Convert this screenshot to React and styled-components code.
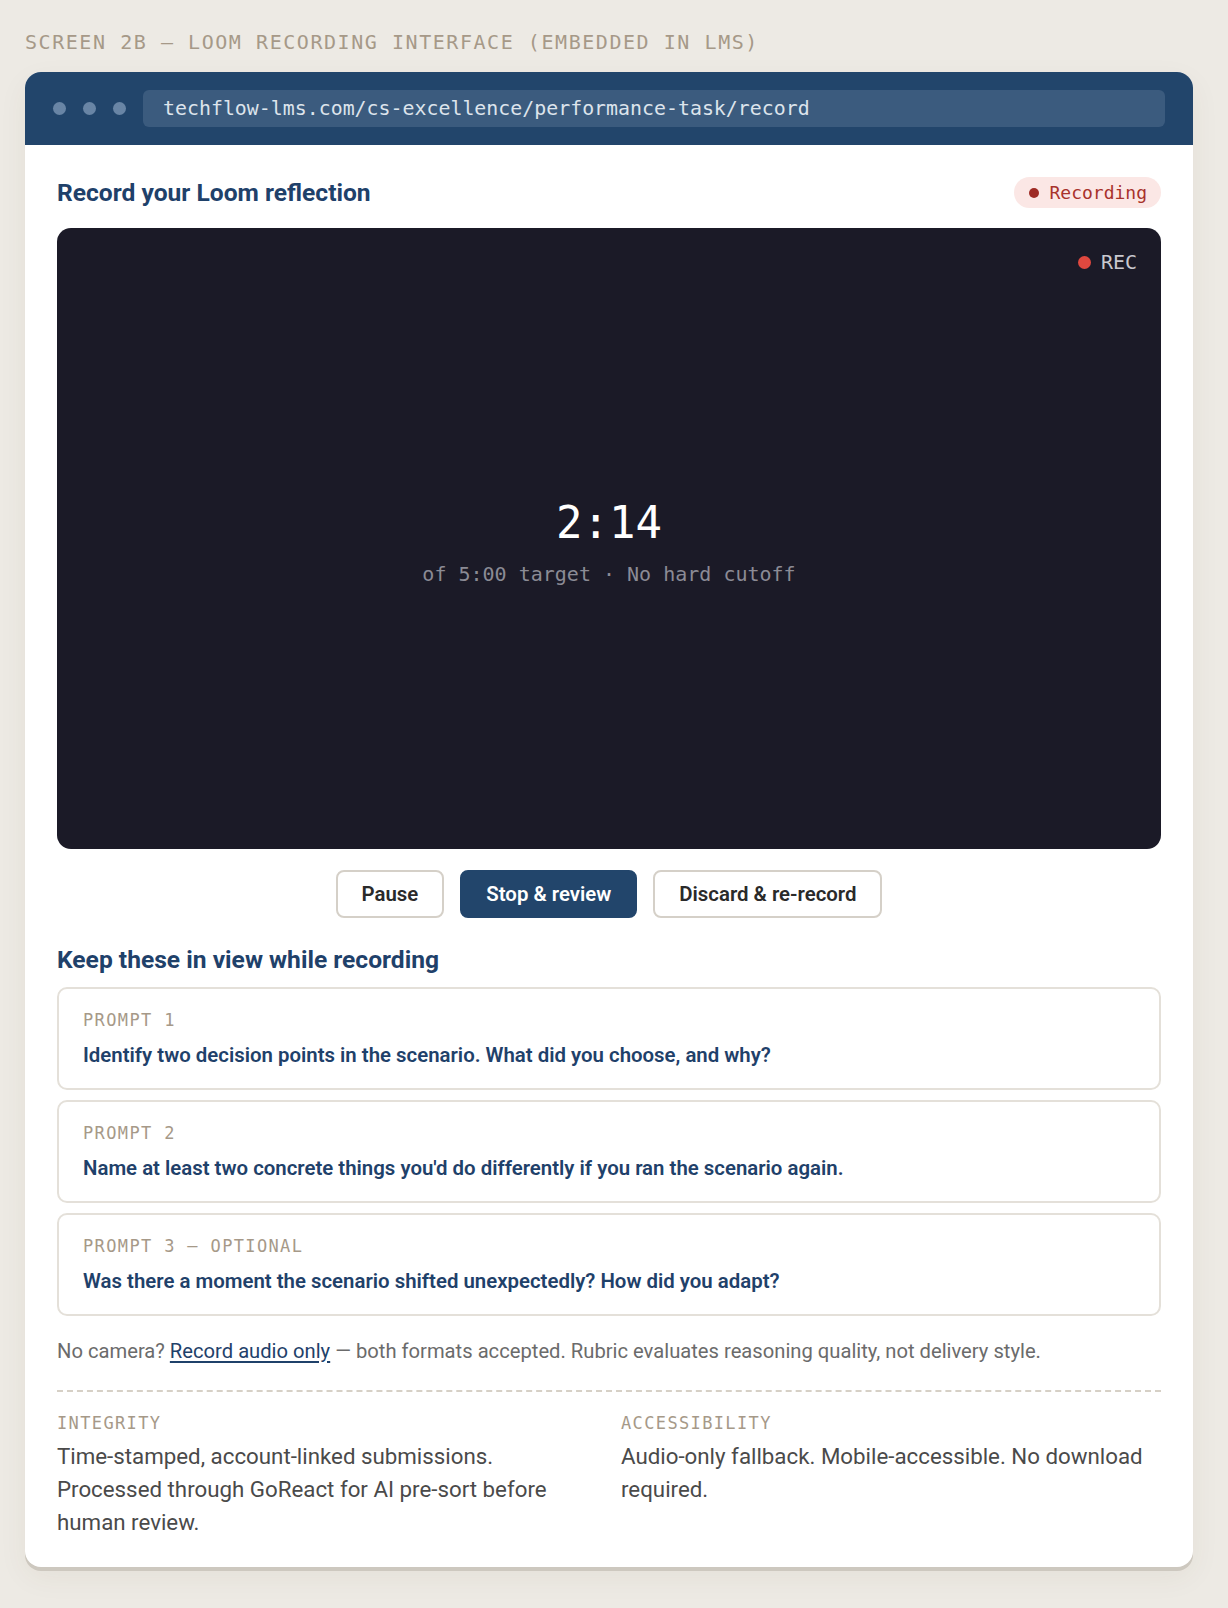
import React from "react";
import styled, { createGlobalStyle } from "styled-components";

const mono = `"DejaVu Sans Mono", "Liberation Mono", monospace`;
const sans = `Roboto, "Noto Sans", "Liberation Sans", sans-serif`;

const GlobalStyle = createGlobalStyle`
  html, body {
    margin: 0;
    padding: 0;
    background: #edeae4;
  }
  body {
    font-family: ${sans};
  }
  * { box-sizing: border-box; }
`;

const Page = styled.div`
  padding: 30px 35px 36px 25px;
`;

const ScreenLabel = styled.div`
  font-family: ${mono};
  font-size: 20px;
  line-height: 24px;
  letter-spacing: 1.55px;
  color: #a69988;
  margin-bottom: 18px;
`;

const Window = styled.div`
  background: #fff;
  border-radius: 16px;
  overflow: hidden;
  box-shadow: 0 4px 0 #cdc8bf, 0 10px 30px rgba(80, 60, 40, 0.06);
`;

const TitleBar = styled.div`
  display: flex;
  align-items: center;
  background: #22456b;
  padding: 18px 28px;
`;

const Dots = styled.div`
  display: flex;
  gap: 17px;
  margin-right: 17px;
`;

const Dot = styled.span`
  width: 13px;
  height: 13px;
  border-radius: 50%;
  background: #6985a5;
`;

const UrlBar = styled.div`
  flex: 1;
  height: 37px;
  display: flex;
  align-items: center;
  padding: 0 20px;
  border-radius: 6px;
  background: #3b5b7e;
  color: #dde4ec;
  font-family: ${mono};
  font-size: 19.9px;
`;

const Body = styled.div`
  padding: 32px 32px 28px;
`;

const HeaderRow = styled.div`
  display: flex;
  align-items: center;
  justify-content: space-between;
  margin-bottom: 20px;
`;

const Heading = styled.h2`
  margin: 0;
  font-size: 24.6px;
  line-height: 30px;
  font-weight: 700;
  color: #1f416a;
`;

const Pill = styled.div`
  display: flex;
  align-items: center;
  gap: 10px;
  height: 31px;
  padding: 0 14px 0 15px;
  border-radius: 16px;
  background: #fbe7e5;
  color: #a8322c;
  font-family: ${mono};
  font-size: 18px;
`;

const PillDot = styled.span`
  width: 10px;
  height: 10px;
  border-radius: 50%;
  background: ${(p) => p.color};
`;

const Video = styled.div`
  position: relative;
  aspect-ratio: 16 / 9;
  background: #1b1a27;
  border-radius: 14px;
  display: flex;
  flex-direction: column;
  align-items: center;
  justify-content: center;
`;

const RecTag = styled.div`
  position: absolute;
  top: 22px;
  right: 24px;
  display: flex;
  align-items: center;
  gap: 10px;
  color: #c9c9cf;
  font-family: ${mono};
  font-size: 20px;
  line-height: 24px;
`;

const RecDot = styled.span`
  width: 13px;
  height: 13px;
  border-radius: 50%;
  background: #e0483f;
`;

const Timer = styled.div`
  margin-top: 6px;
  font-family: ${mono};
  font-size: 44px;
  line-height: 52px;
  font-weight: 500;
  color: #ffffff;
`;

const TimerSub = styled.div`
  margin-top: 12px;
  font-family: ${mono};
  font-size: 20px;
  line-height: 26px;
  color: #8b8b95;
`;

const Controls = styled.div`
  display: flex;
  justify-content: center;
  gap: 16px;
  margin-top: 21px;
`;

const Button = styled.button`
  height: 48px;
  padding: 0 24px;
  border-radius: 8px;
  border: 2px solid ${(p) => (p.$primary ? "#22456b" : "#d5d0c8")};
  background: ${(p) => (p.$primary ? "#22456b" : "#fff")};
  color: ${(p) => (p.$primary ? "#fff" : "#2a2a2a")};
  font-family: ${sans};
  font-size: 20.4px;
  font-weight: 600;
  cursor: pointer;
`;

const SectionHeading = styled(Heading)`
  margin-top: 27px;
  margin-bottom: 12px;
`;

const PromptList = styled.div`
  display: flex;
  flex-direction: column;
  gap: 10px;
`;

const PromptCard = styled.div`
  border: 2px solid #e4e0d9;
  border-radius: 10px;
  padding: 20px 24px 19px;
`;

const MonoLabel = styled.div`
  font-family: ${mono};
  font-size: 17px;
  line-height: 22px;
  letter-spacing: 0.08em;
  color: #a69988;
`;

const PromptText = styled.div`
  margin-top: 10px;
  font-size: 20.4px;
  line-height: 28px;
  font-weight: 600;
  color: #1f416a;
`;

const Note = styled.p`
  margin: 20px 0 0;
  font-size: 20.2px;
  line-height: 30px;
  color: #6b6b6b;
`;

const Link = styled.a`
  color: #1f416a;
  text-decoration: underline;
  text-underline-offset: 3px;
`;

const InfoGrid = styled.div`
  display: grid;
  grid-template-columns: 1fr 1fr;
  gap: 24px;
  margin-top: 24px;
  padding-top: 20px;
  border-top: 2px dashed #d6d0c6;
`;

const InfoText = styled.div`
  margin-top: 6px;
  font-size: 22.3px;
  line-height: 33px;
  color: #4a4a4a;
`;

const prompts = [
  { label: "PROMPT 1", text: "Identify two decision points in the scenario. What did you choose, and why?" },
  { label: "PROMPT 2", text: "Name at least two concrete things you'd do differently if you ran the scenario again." },
  { label: "PROMPT 3 — OPTIONAL", text: "Was there a moment the scenario shifted unexpectedly? How did you adapt?" },
];

export default function App() {
  return (
    <>
      <GlobalStyle />
      <Page>
        <ScreenLabel>SCREEN 2B — LOOM RECORDING INTERFACE (EMBEDDED IN LMS)</ScreenLabel>
        <Window>
          <TitleBar>
            <Dots>
              <Dot />
              <Dot />
              <Dot />
            </Dots>
            <UrlBar>techflow-lms.com/cs-excellence/performance-task/record</UrlBar>
          </TitleBar>
          <Body>
            <HeaderRow>
              <Heading>Record your Loom reflection</Heading>
              <Pill>
                <PillDot color="#9e2b25" />
                Recording
              </Pill>
            </HeaderRow>
            <Video>
              <RecTag>
                <RecDot />
                REC
              </RecTag>
              <Timer>2:14</Timer>
              <TimerSub>of 5:00 target · No hard cutoff</TimerSub>
            </Video>
            <Controls>
              <Button>Pause</Button>
              <Button $primary>Stop &amp; review</Button>
              <Button>Discard &amp; re-record</Button>
            </Controls>
            <SectionHeading>Keep these in view while recording</SectionHeading>
            <PromptList>
              {prompts.map((p) => (
                <PromptCard key={p.label}>
                  <MonoLabel>{p.label}</MonoLabel>
                  <PromptText>{p.text}</PromptText>
                </PromptCard>
              ))}
            </PromptList>
            <Note>
              No camera? <Link href="#">Record audio only</Link> — both formats accepted. Rubric evaluates
              reasoning quality, not delivery style.
            </Note>
            <InfoGrid>
              <div>
                <MonoLabel>INTEGRITY</MonoLabel>
                <InfoText>
                  Time-stamped, account-linked submissions. Processed through GoReact for AI pre-sort before
                  human review.
                </InfoText>
              </div>
              <div>
                <MonoLabel>ACCESSIBILITY</MonoLabel>
                <InfoText>Audio-only fallback. Mobile-accessible. No download required.</InfoText>
              </div>
            </InfoGrid>
          </Body>
        </Window>
      </Page>
    </>
  );
}
